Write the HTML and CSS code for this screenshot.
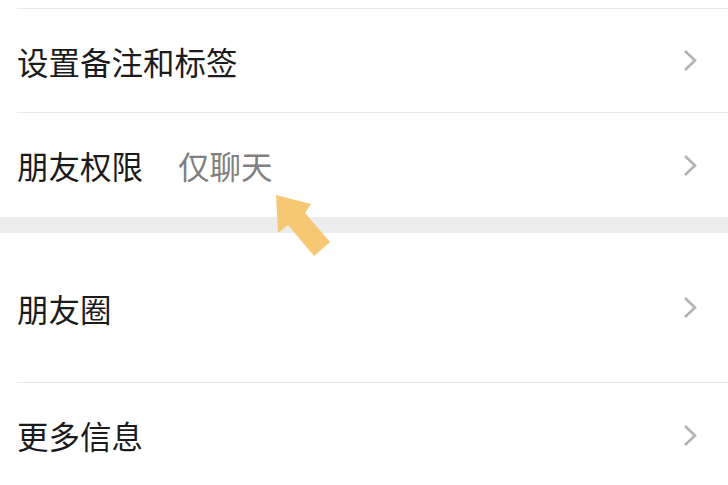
FILE: index.html
```html
<!DOCTYPE html>
<html lang="zh-CN">

<head>
    <meta charset="UTF-8">
    <meta name="viewport" content="width=device-width, initial-scale=1.0">
    <title>朋友资料</title>
    <link rel="stylesheet" href="styles.css">
</head>

<body>
    <div class="list">
        <div class="item stub"></div>

        <div class="item tall-103 line">
            <span class="label">设置备注和标签</span>
            <svg class="chevron" viewBox="0 0 14 23"><polyline points="2,2 12,11.5 2,21" /></svg>
        </div>

        <div class="item tall-104">
            <span class="label">朋友权限</span>
            <span class="value">仅聊天</span>
            <svg class="chevron" viewBox="0 0 14 23"><polyline points="2,2 12,11.5 2,21" /></svg>
        </div>
    </div>

    <div class="band"></div>

    <div class="list">
        <div class="item tall-149 line">
            <span class="label">朋友圈</span>
            <svg class="chevron" viewBox="0 0 14 23"><polyline points="2,2 12,11.5 2,21" /></svg>
        </div>

        <div class="item tall-104">
            <span class="label">更多信息</span>
            <svg class="chevron" viewBox="0 0 14 23"><polyline points="2,2 12,11.5 2,21" /></svg>
        </div>
    </div>

    <!-- pointer drawn over the screenshot -->
    <svg class="pointer" viewBox="0 0 728 485">
        <polygon points="276,195 311,204 305,213 330,242 314,256 288,225 278,233" />
    </svg>
</body>

</html>
```

FILE: styles.css
```css
body {
    margin: 0;
    background: #ffffff;
    font-family: "Noto Sans CJK SC", "Noto Sans", sans-serif;
    overflow: hidden;
}

.list {
    background: #ffffff;
}

.item {
    display: flex;
    align-items: center;
    margin-left: 17px;
    padding-right: 31px;
    padding-top: 0;
    box-sizing: border-box;
}

.stub {
    height: 9px;
    border-bottom: 1px solid #e8e8e8;
}

.line {
    border-bottom: 1px solid #e8e8e8;
}

.tall-103 {
    height: 104px;
}

.tall-104 {
    height: 104px;
}

.tall-149 {
    height: 150px;
}

.label {
    font-size: 31.5px;
    color: #1b1b1b;
}

.value {
    font-size: 31.5px;
    color: #808080;
    margin-left: 35px;
}

.chevron {
    margin-left: auto;
    width: 14px;
    height: 23px;
    fill: none;
    stroke: #b3b3b3;
    stroke-width: 2.6;
}

.band {
    height: 16px;
    background: #ededed;
}

.pointer {
    position: absolute;
    top: 0;
    left: 0;
    width: 728px;
    height: 485px;
    pointer-events: none;
}

.pointer polygon {
    fill: #f6c873;
}
```
